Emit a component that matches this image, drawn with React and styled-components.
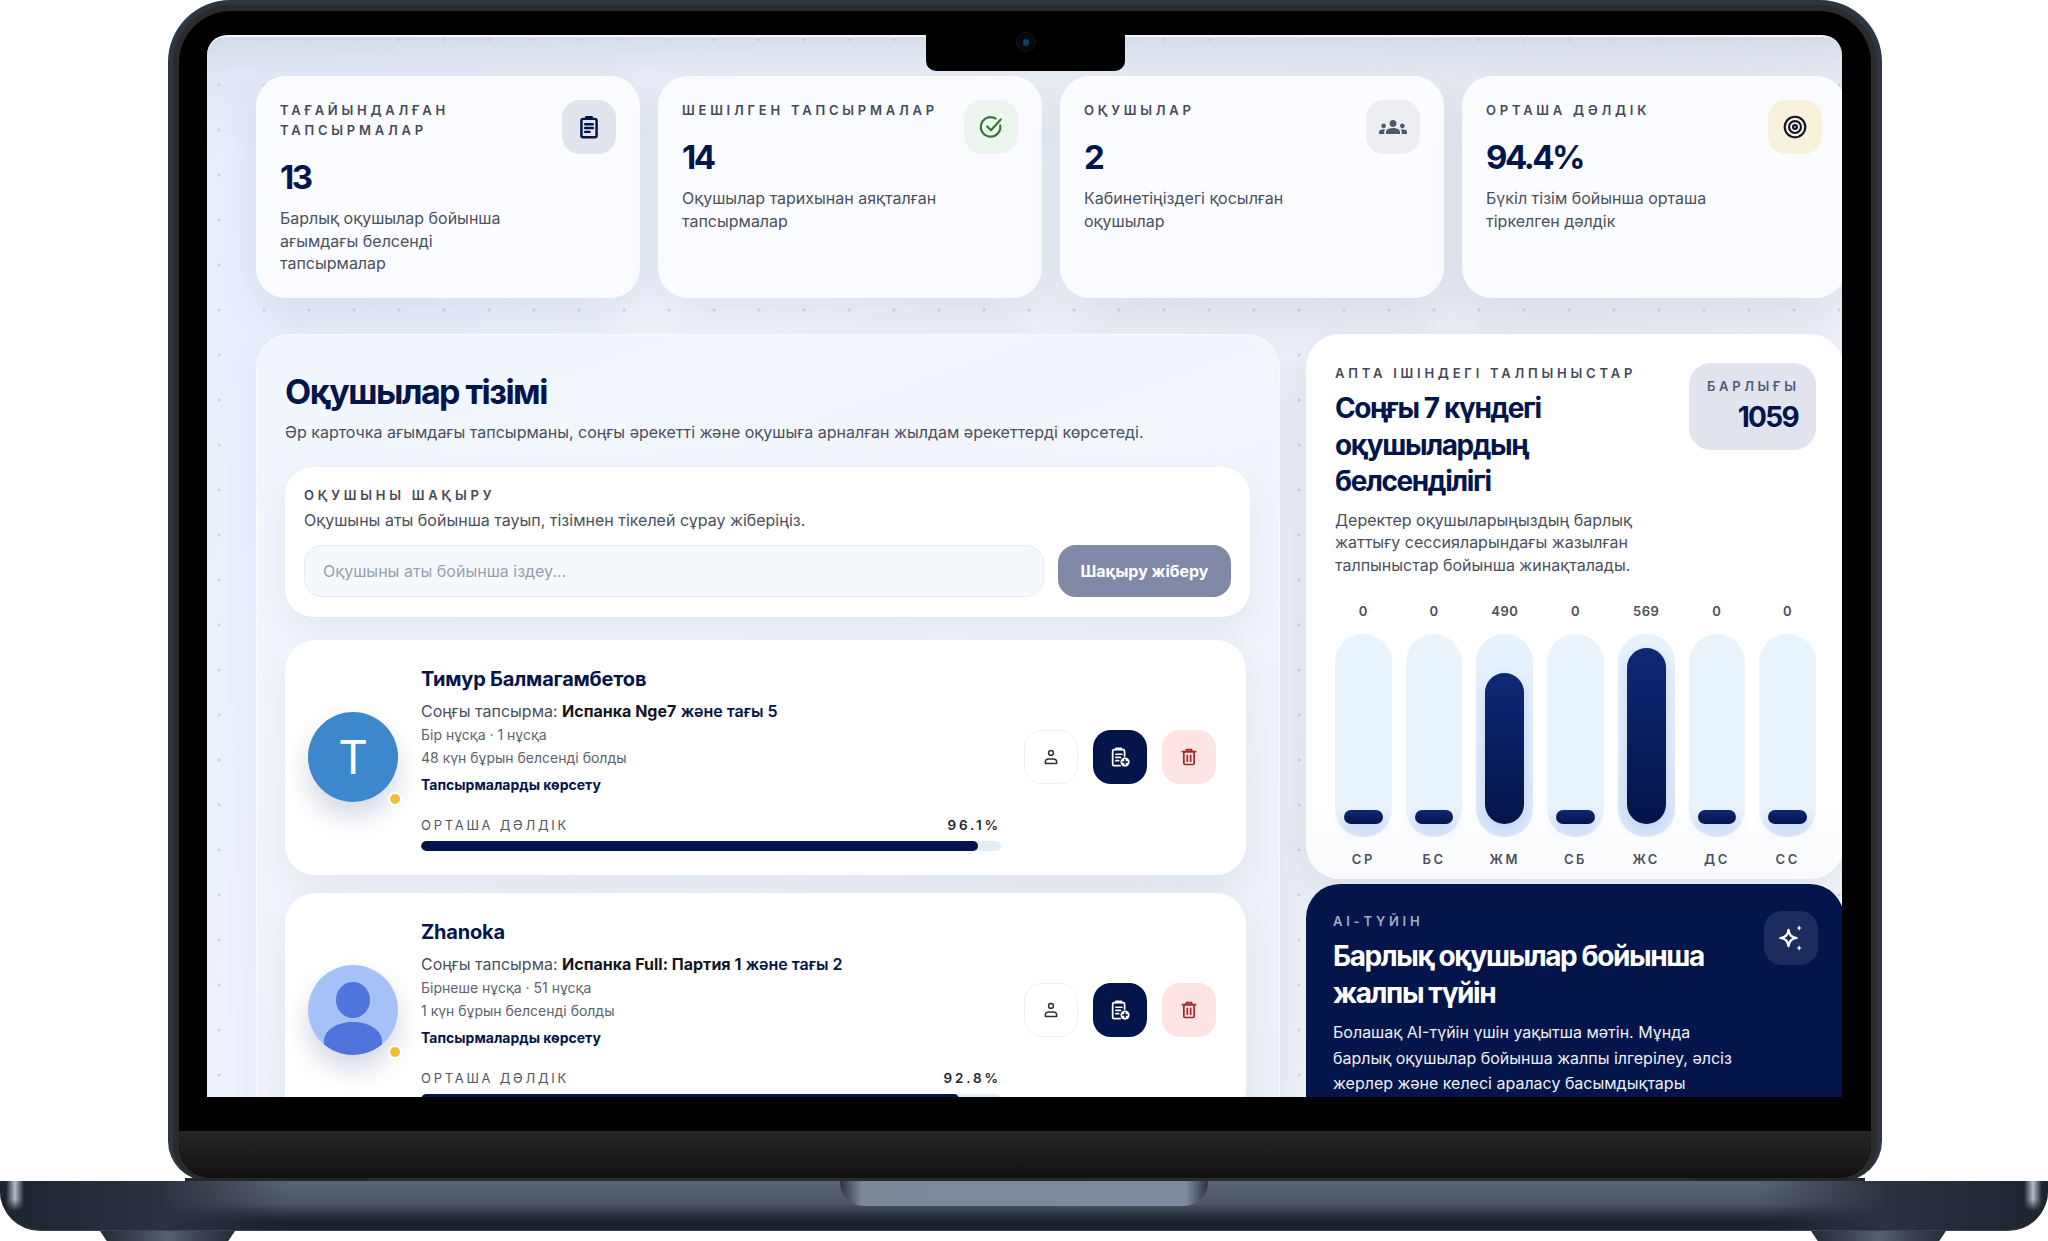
import React from 'react';
import styled, { createGlobalStyle } from 'styled-components';
import { MdGroups } from 'react-icons/md';

const NAVY = '#03154b';
const Global = createGlobalStyle`
  html, body { margin: 0; padding: 0; background: #fff; }
  body { font-family: Inter, "Noto Sans", sans-serif; width: 2048px; height: 1241px; overflow: hidden; -webkit-font-smoothing: antialiased; }
  * { box-sizing: border-box; }
`;

const Stage = styled.div`display: flex; flex-direction: column; width: 2048px; height: 1241px; overflow: hidden;`;
const Lid = styled.div`
  width: 1714px; height: 1181px; margin-left: 168px; padding: 5px 5px 0;
  background: #2e3644; border-radius: 62px 62px 40px 40px; display: flex; flex-shrink: 0;
`;
const LidInner = styled.div`
  flex: 1; min-width: 0; padding: 6px 6px 3px; background: #2b2a2c; border-radius: 58px 58px 36px 36px; display: flex; position: relative;
  &::before { content: ''; position: absolute; left: 12px; bottom: -1px; width: 183px; height: 4px; background: #262527; }
  &::after { content: ''; position: absolute; right: 12px; bottom: -1px; width: 175px; height: 4px; background: #262527; }
`;
const Bezel = styled.div`
  flex: 1; min-width: 0; background: #000; border-radius: 52px 52px 32px 32px; overflow: hidden; display: flex; flex-direction: column; position: relative;
`;
const ScreenWrap = styled.div`flex: 1; padding: 24px 29px 34px 28px; display: flex; min-height: 0; min-width: 0;`;
const Chin = styled.div`height: 47px; flex-shrink: 0; background: linear-gradient(180deg, #262626, #111);`;
const Notch = styled.div`
  position: absolute; top: 0; left: 747px; width: 199px; height: 60px; background: #000; border-radius: 0 0 10px 10px; z-index: 5;
  display: flex; align-items: center; justify-content: center; padding-top: 2px;
`;
const Camera = styled.div`
  width: 20px; height: 20px; border-radius: 50%; background: #05080c; border: 1px solid #0e1a26;
  display: flex; align-items: center; justify-content: center;
  &::after { content: ''; width: 6px; height: 7px; border-radius: 3px; background: #0f3f6b; }
`;
const Screen = styled.div`
  flex: 1; min-width: 0; position: relative; overflow: hidden; border-radius: 20px 20px 0 0; border-top: 2px solid #f4f6fa;
  background:
    radial-gradient(circle, #c8cedb 1px, transparent 1.6px) -10.5px -19.5px / 45px 45px,
    linear-gradient(180deg, rgba(190,200,220,.5) 0, rgba(210,216,228,.25) 40px, rgba(225,230,240,0) 120px),
    linear-gradient(110deg, #e6eefc 0, #f1f5fc 30%, #eaeef5 70%, #f2f5fa 100%);
`;
const Content = styled.div`width: 1590px; margin-left: 49px; padding-top: 39px;`;
const Stats = styled.div`display: grid; grid-template-columns: repeat(4, 384px); gap: 18px;`;
const StatCard = styled.div`
  height: 222px; padding: 24px; border-radius: 30px; display: flex; justify-content: space-between; gap: 24px;
  background: #fbfcff; box-shadow: 0 18px 44px rgba(20, 40, 100, .09);
`;
const StatText = styled.div`flex: 1; min-width: 0;`;
const Eyebrow = styled.div`
  font-size: 13px; font-weight: 600; line-height: ${p => p.$lh || 20}px; letter-spacing: ${p => p.$ls || .29}em; color: ${p => p.$c || '#444a58'};
  text-transform: uppercase;
`;
const StatValue = styled.div`font-size: 33px; font-weight: 700; line-height: 36px; letter-spacing: -.075em; color: ${NAVY}; margin: 19px 0 12px;`;
const StatDesc = styled.div`font-size: 16px; line-height: 22.6px; color: #4a505e;`;
const IconBox = styled.div`
  width: 54px; height: 54px; flex-shrink: 0; border-radius: 18px; display: flex; align-items: center; justify-content: center;
  background: ${p => p.$bg}; color: ${p => p.$c};
`;
const Columns = styled.div`display: grid; grid-template-columns: 1024px 538px; gap: 26px; margin-top: 36px; align-items: start;`;
const Panel = styled.section`
  height: 900px; padding: 28px 29px 0 28px; border-radius: 34px 34px 0 0; border: 1px solid #fafbff; border-bottom: 0;
  background: linear-gradient(160deg, #f1f6fe 0, #f3f6fc 35%, #eaeef6 100%);
  box-shadow: 0 10px 40px rgba(20,40,100,.05);
`;
const Title = styled.h1`margin: 8px 0 8px; font-size: 34px; font-weight: 700; line-height: 42px; letter-spacing: -.045em; color: ${NAVY};`;
const Sub = styled.p`margin: 0 0 24px; font-size: 16px; line-height: 22px; color: #4a505e;`;
const Invite = styled.div`
  height: 150px; padding: 20px 19px; border-radius: 28px; background: #fff; box-shadow: 0 14px 34px rgba(20,40,100,.07);
`;
const InviteText = styled.div`margin: 6px 0 14px; font-size: 16px; line-height: 22px; color: #4a505e;`;
const InviteRow = styled.div`display: flex; gap: 14px;`;
const SearchInput = styled.input`
  flex: 1; height: 52px; padding: 0 18px; border-radius: 18px; border: 1px solid #e5ecf6; background: #f5f9fe;
  font: 400 16px Inter, sans-serif; color: #333; outline: none;
  &::placeholder { color: #989fae; opacity: 1; }
`;
const InviteButton = styled.button`
  width: 173px; height: 52px; border: 0; border-radius: 18px; background: #8089a5; color: #fff; font: 700 16px Inter, sans-serif;
`;
const StudentCard = styled.article`
  width: 961px; height: 235px; margin-top: ${p => p.$first ? 23 : 18}px; padding: 27px 30px 0 23px; border-radius: 30px; background: #fff;
  display: flex; align-items: flex-start; gap: 23px; box-shadow: 0 14px 34px rgba(20,40,100,.07);
`;
const AvatarWrap = styled.div`position: relative; width: 90px; height: 90px; margin-top: 45px; flex-shrink: 0;`;
const Avatar = styled.div`
  width: 90px; height: 90px; border-radius: 50%; overflow: hidden; display: flex; align-items: center; justify-content: center;
  background: ${p => p.$bg}; color: #fff; font-size: 46px; font-weight: 400; box-shadow: 0 14px 26px rgba(20,40,100,.18);
`;
const Dot = styled.span`
  position: absolute; right: -4px; bottom: -4px; width: 14px; height: 14px; border-radius: 50%; background: #f2bc3f; border: 2px solid #fff;
`;
const Info = styled.div`width: 580px; flex-shrink: 0;`;
const Name = styled.div`font-size: 20px; font-weight: 700; line-height: 24px; letter-spacing: -.01em; color: ${NAVY};`;
const Latest = styled.div`margin-top: 9px; font-size: 16px; line-height: 22px; color: #4a505e;`;
const Task = styled.b`font-weight: 700; color: #14161c;`;
const More = styled.b`font-weight: 600; color: ${NAVY};`;
const Meta = styled.div`margin-top: 3px; font-size: 14px; line-height: 20px; color: #5d6370;`;
const Link = styled.div`margin-top: 7px; font-size: 14px; font-weight: 700; line-height: 20px; color: ${NAVY};`;
const AvgRow = styled.div`display: flex; justify-content: space-between; margin-top: 21px; font-size: 13px; line-height: 18px;`;
const AvgLabel = styled.span`letter-spacing: .21em; color: #4f5562;`;
const AvgValue = styled.span`font-size: 13.5px; letter-spacing: .21em; font-weight: 600; color: #23272f;`;
const Progress = styled.div`height: 10px; margin-top: 7px; border-radius: 5px; background: #e3edf6; overflow: hidden;`;
const ProgressFill = styled.div`height: 100%; border-radius: 5px; background: ${NAVY};`;
const Actions = styled.div`display: flex; gap: 15px; margin-top: 63px; margin-left: 0;`;
const ActionButton = styled.button`
  width: 54px; height: 54px; padding: 0; border-radius: 18px; display: flex; align-items: center; justify-content: center;
  border: ${p => p.$border ? '1.5px solid #eef0f5' : '0'}; background: ${p => p.$bg}; color: ${p => p.$c};
`;
const Side = styled.div`display: flex; flex-direction: column; gap: 5px;`;
const ChartCard = styled.section`
  height: 545px; padding: 31px 28px 0 29px; border-radius: 34px; background: linear-gradient(180deg, #fff 0, #fff 85%, #f9fafd 100%);
  box-shadow: 0 12px 34px rgba(20,40,100,.08);
`;
const ChartHead = styled.div`display: flex; justify-content: space-between; gap: 20px;`;
const ChartTitle = styled.h2`margin: 9px 0 9px; font-size: 28px; font-weight: 700; line-height: 36.5px; letter-spacing: -.05em; color: ${p => p.$c || NAVY};`;
const ChartDesc = styled.p`margin: 0; font-size: 16px; line-height: 22.6px; color: #4a505e;`;
const TotalPill = styled.div`
  width: 127px; height: 87px; flex-shrink: 0; margin-top: -2px; padding: 15px 18px; border-radius: 22px; background: #e1e4ec; text-align: right;
`;
const TotalLabel = styled.div`font-size: 13px; font-weight: 600; line-height: 16px; letter-spacing: .28em; color: #4f5a80; white-space: nowrap; text-align: left;`;
const TotalValue = styled.div`margin-top: 7px; font-size: 28px; font-weight: 700; line-height: 32px; letter-spacing: -.06em; color: ${NAVY};`;
const Bars = styled.div`display: grid; grid-template-columns: repeat(7, 1fr); gap: 14px; margin-top: 27px;`;
const BarCol = styled.div`display: flex; flex-direction: column; align-items: center;`;
const BarValue = styled.div`font-size: 13px; font-weight: 600; line-height: 16px; letter-spacing: .04em; color: #4a505e;`;
const Track = styled.div`
  width: 100%; height: 203px; margin-top: 15px; padding: 0 9px 13.5px; border-radius: 28px; display: flex; align-items: flex-end;
  background: ${p => p.$on
    ? 'linear-gradient(180deg, #e6f2fc 0, #dbe8fa 100%)'
    : 'linear-gradient(180deg, #eaf4fc 0, #eaf4fc 85%, #dce8fa 100%)'};
`;
const Fill = styled.div`
  width: 100%; border-radius: ${p => p.$r}px; background: linear-gradient(180deg, #0e2875 0, #03144a 100%);
  box-shadow: 0 6px 14px rgba(30, 80, 200, .14);
`;
const DayLabel = styled.div`margin-top: 14px; font-size: 13px; font-weight: 600; line-height: 16px; letter-spacing: .2em; color: #4a505e;`;
const AiCard = styled.section`
  height: 213px; padding: 29px 26px 0 27px; border-radius: 34px 34px 0 0; background: ${NAVY}; display: flex; justify-content: space-between; gap: 20px;
`;
const AiText = styled.div`width: 410px;`;
const AiBody = styled.p`margin: 7px 0 0; font-size: 16px; line-height: 25.6px; color: #edf0f7;`;
const AiBox = styled(IconBox)`margin-top: -2px;`;
const Base = styled.div`
  position: relative; width: 2048px; height: 50px; flex-shrink: 0; display: flex; justify-content: center; overflow: hidden;
  border-radius: 0 0 40px 40px; border-bottom: 1px solid #3d4450;
  background:
    linear-gradient(90deg, #1c2430 0, #2b3240 8%, rgba(60,70,85,0) 14%, rgba(60,70,85,0) 86%, #2b3240 92%, #1c2430 100%),
    linear-gradient(180deg, #5a6473 0, #4d5663 46%, #2b3340 68%, #1a212c 84%, #1d232d 100%);
  &::before, &::after {
    content: ''; position: absolute; top: 0; width: 18px; height: 30px;
    background: linear-gradient(90deg, rgba(190,195,205,0), rgba(200,204,212,.9), rgba(190,195,205,0));
    -webkit-mask-image: linear-gradient(180deg, #000 60%, transparent);
  }
  &::before { left: 6px; }
  &::after { right: 6px; }
`;
const BaseNotch = styled.div`
  width: 368px; height: 25px; margin-left: 0; border-radius: 0 0 24px 24px;
  background: linear-gradient(90deg, #2d3442 0, #7d8899 6%, #7f8a9c 94%, #2d3442 100%);
`;
const FeetRow = styled.div`display: flex; justify-content: space-between; padding: 0 102px 0 100px; height: 10px;`;
const Foot = styled.div`
  width: 135px; height: 10px; clip-path: polygon(0 0, 100% 0, 95% 100%, 5% 100%);
  background: linear-gradient(90deg, #262c38 0, #3a4250 25%, #566070 50%, #3a4250 75%, #262c38 100%);
`;

const Ico = ({ size = 24, children, sw = 2 }) => (
  <svg width={size} height={size} viewBox="0 0 24 24" fill="none" stroke="currentColor" strokeWidth={sw} strokeLinecap="round" strokeLinejoin="round">{children}</svg>
);
const ClipboardIcon = () => (
  <Ico size={26} sw={2.3}>
    <rect x="5" y="4.5" width="14" height="17" rx="1.6" />
    <path d="M9.5 4.5V3h5v1.5" />
    <path d="M8.5 9.5h7M8.5 13h7M8.5 16.5h4" />
  </Ico>
);
const CheckIcon = () => (
  <Ico size={26} sw={2}>
    <path d="M20.5 10.5a9 9 0 1 1-4.3-6.3" />
    <path d="M8.5 11.5l3.5 3.5L21 5" />
  </Ico>
);
const TargetIcon = () => (
  <Ico size={26} sw={2}>
    <circle cx="12" cy="12" r="9.5" />
    <circle cx="12" cy="12" r="5.5" />
    <circle cx="12" cy="12" r="1.8" />
  </Ico>
);
const PersonIcon = () => (
  <Ico size={18} sw={2}>
    <circle cx="12" cy="6.6" r="3.2" />
    <path d="M4.5 20.5v-2.2c0-2.2 2-3.8 4.5-3.8h6c2.5 0 4.5 1.6 4.5 3.8v2.2z" />
  </Ico>
);
const ClipPlusIcon = () => (
  <svg width="22" height="22" viewBox="0 0 24 24" fill="none">
    <g stroke="#fff" strokeWidth="1.9" strokeLinejoin="round" strokeLinecap="round">
      <path d="M12 21.5H5.6A1.6 1.6 0 0 1 4 19.9V5.6A1.6 1.6 0 0 1 5.6 4H15.4A1.6 1.6 0 0 1 17 5.6V11" />
      <path d="M7.5 4V2.5h6V4" />
      <path d="M7.5 9h6.5M7.5 12.5h5M7.5 16h3" />
    </g>
    <circle cx="17.5" cy="17.5" r="5" fill="#fff" />
    <path d="M17.5 15v5M15 17.5h5" stroke={NAVY} strokeWidth="1.6" strokeLinecap="round" />
  </svg>
);
const TrashIcon = () => (
  <Ico size={20} sw={2.1}>
    <path d="M4 5.5h16" />
    <path d="M9 5V3h6v2" />
    <rect x="5.8" y="5.5" width="12.4" height="15.5" rx="1.4" />
    <path d="M10 10v7M14 10v7" />
  </Ico>
);
const SparkIcon = () => (
  <svg width="30" height="30" viewBox="0 0 24 24" fill="none">
    <path d="M10 5.5c.7 4.3 2.2 5.8 6.5 6.5-4.3.7-5.8 2.2-6.5 6.5-.7-4.3-2.2-5.8-6.5-6.5 4.3-.7 5.8-2.2 6.5-6.5z" stroke="#fff" strokeWidth="1.8" strokeLinejoin="round" />
    <path d="M18.5 1.5c.3 1.7.9 2.3 2.5 2.5-1.6.2-2.2.8-2.5 2.5-.3-1.7-.9-2.3-2.5-2.5 1.6-.2 2.2-.8 2.5-2.5zM18.5 17.5c.3 1.7.9 2.3 2.5 2.5-1.6.2-2.2.8-2.5 2.5-.3-1.7-.9-2.3-2.5-2.5 1.6-.2 2.2-.8 2.5-2.5z" fill="#fff" />
  </svg>
);
const PersonFill = () => (
  <svg width="90" height="90" viewBox="0 0 90 90">
    <ellipse cx="45" cy="35" rx="17" ry="18" fill="#4f74dc" />
    <path d="M16 90V76c0-11 13-19 29-19s29 8 29 19v14z" fill="#4f74dc" />
  </svg>
);

const stats = [
  { label: 'Тағайындалған тапсырмалар', value: '13', desc: 'Барлық оқушылар бойынша ағымдағы белсенді тапсырмалар', bg: '#e1e4ec', c: NAVY, icon: <ClipboardIcon /> },
  { label: 'Шешілген тапсырмалар', value: '14', desc: 'Оқушылар тарихынан аяқталған тапсырмалар', bg: '#edf6ee', c: '#2e7d32', icon: <CheckIcon /> },
  { label: 'Оқушылар', value: '2', desc: 'Кабинетіңіздегі қосылған оқушылар', bg: '#eceef1', c: '#4d5a6b', icon: <MdGroups size={28} /> },
  { label: 'Орташа дәлдік', value: '94.4%', desc: 'Бүкіл тізім бойынша орташа тіркелген дәлдік', bg: '#f8f1dc', c: '#10162f', icon: <TargetIcon /> },
];
const students = [
  { name: 'Тимур Балмагамбетов', task: 'Испанка Nge7', more: 'және тағы 5', v: 'Бір нұсқа · 1 нұсқа', seen: '48 күн бұрын белсенді болды', acc: 96.1, bg: '#3d87cc', av: 'T' },
  { name: 'Zhanoka', task: 'Испанка Full: Партия 1', more: 'және тағы 2', v: 'Бірнеше нұсқа · 51 нұсқа', seen: '1 күн бұрын белсенді болды', acc: 92.8, bg: '#a6c1f8', av: <PersonFill /> },
];
const days = [
  { d: 'СР', v: 0, h: 14 }, { d: 'БС', v: 0, h: 14 }, { d: 'ЖМ', v: 490, h: 151 }, { d: 'СБ', v: 0, h: 14 },
  { d: 'ЖС', v: 569, h: 176 }, { d: 'ДС', v: 0, h: 14 }, { d: 'СС', v: 0, h: 14 },
];

export default function App() {
  return (
    <Stage>
      <Global />
      <Lid>
        <LidInner>
          <Bezel>
            <Notch><Camera /></Notch>
            <ScreenWrap>
              <Screen>
                <Content>
                  <Stats>
                    {stats.map(s => (
                      <StatCard key={s.label}>
                        <StatText>
                          <Eyebrow>{s.label}</Eyebrow>
                          <StatValue>{s.value}</StatValue>
                          <StatDesc>{s.desc}</StatDesc>
                        </StatText>
                        <IconBox $bg={s.bg} $c={s.c}>{s.icon}</IconBox>
                      </StatCard>
                    ))}
                  </Stats>
                  <Columns>
                    <Panel>
                      <Title>Оқушылар тізімі</Title>
                      <Sub>Әр карточка ағымдағы тапсырманы, соңғы әрекетті және оқушыға арналған жылдам әрекеттерді көрсетеді.</Sub>
                      <Invite>
                        <Eyebrow $lh={16}>Оқушыны шақыру</Eyebrow>
                        <InviteText>Оқушыны аты бойынша тауып, тізімнен тікелей сұрау жіберіңіз.</InviteText>
                        <InviteRow>
                          <SearchInput placeholder="Оқушыны аты бойынша іздеу..." readOnly />
                          <InviteButton>Шақыру жіберу</InviteButton>
                        </InviteRow>
                      </Invite>
                      {students.map((s, i) => (
                        <StudentCard key={s.name} $first={i === 0}>
                          <AvatarWrap>
                            <Avatar $bg={s.bg}>{s.av}</Avatar>
                            <Dot />
                          </AvatarWrap>
                          <Info>
                            <Name>{s.name}</Name>
                            <Latest>Соңғы тапсырма: <Task>{s.task}</Task> <More>{s.more}</More></Latest>
                            <Meta>{s.v}</Meta>
                            <Meta>{s.seen}</Meta>
                            <Link>Тапсырмаларды көрсету</Link>
                            <AvgRow>
                              <AvgLabel>ОРТАША ДӘЛДІК</AvgLabel>
                              <AvgValue>{s.acc}%</AvgValue>
                            </AvgRow>
                            <Progress><ProgressFill style={{ width: `${s.acc}%` }} /></Progress>
                          </Info>
                          <Actions>
                            <ActionButton $bg="#fff" $c="#2a2f3a" $border><PersonIcon /></ActionButton>
                            <ActionButton $bg={NAVY} $c="#fff"><ClipPlusIcon /></ActionButton>
                            <ActionButton $bg="#fbe4e3" $c="#a32a2a"><TrashIcon /></ActionButton>
                          </Actions>
                        </StudentCard>
                      ))}
                    </Panel>
                    <Side>
                      <ChartCard>
                        <ChartHead>
                          <div>
                            <Eyebrow $lh={16}>Апта ішіндегі талпыныстар</Eyebrow>
                            <ChartTitle>Соңғы 7 күндегі оқушылардың белсенділігі</ChartTitle>
                            <ChartDesc>Деректер оқушыларыңыздың барлық жаттығу сессияларындағы жазылған талпыныстар бойынша жинақталады.</ChartDesc>
                          </div>
                          <TotalPill>
                            <TotalLabel>БАРЛЫҒЫ</TotalLabel>
                            <TotalValue>1059</TotalValue>
                          </TotalPill>
                        </ChartHead>
                        <Bars>
                          {days.map(d => (
                            <BarCol key={d.d}>
                              <BarValue>{d.v}</BarValue>
                              <Track $on={d.v > 0}>
                                <Fill $r={d.v > 0 ? 20 : 7} style={{ height: d.h }} />
                              </Track>
                              <DayLabel>{d.d}</DayLabel>
                            </BarCol>
                          ))}
                        </Bars>
                      </ChartCard>
                      <AiCard>
                        <AiText>
                          <Eyebrow $lh={16} $c="#a4abc0">AI-түйін</Eyebrow>
                          <ChartTitle $c="#fff">Барлық оқушылар бойынша жалпы түйін</ChartTitle>
                          <AiBody>Болашақ AI-түйін үшін уақытша мәтін. Мұнда барлық оқушылар бойынша жалпы ілгерілеу, әлсіз жерлер және келесі араласу басымдықтары</AiBody>
                        </AiText>
                        <AiBox $bg="rgba(255,255,255,.1)" $c="#fff"><SparkIcon /></AiBox>
                      </AiCard>
                    </Side>
                  </Columns>
                </Content>
              </Screen>
            </ScreenWrap>
            <Chin />
          </Bezel>
        </LidInner>
      </Lid>
      <Base><BaseNotch /></Base>
      <FeetRow><Foot /><Foot /></FeetRow>
    </Stage>
  );
}
